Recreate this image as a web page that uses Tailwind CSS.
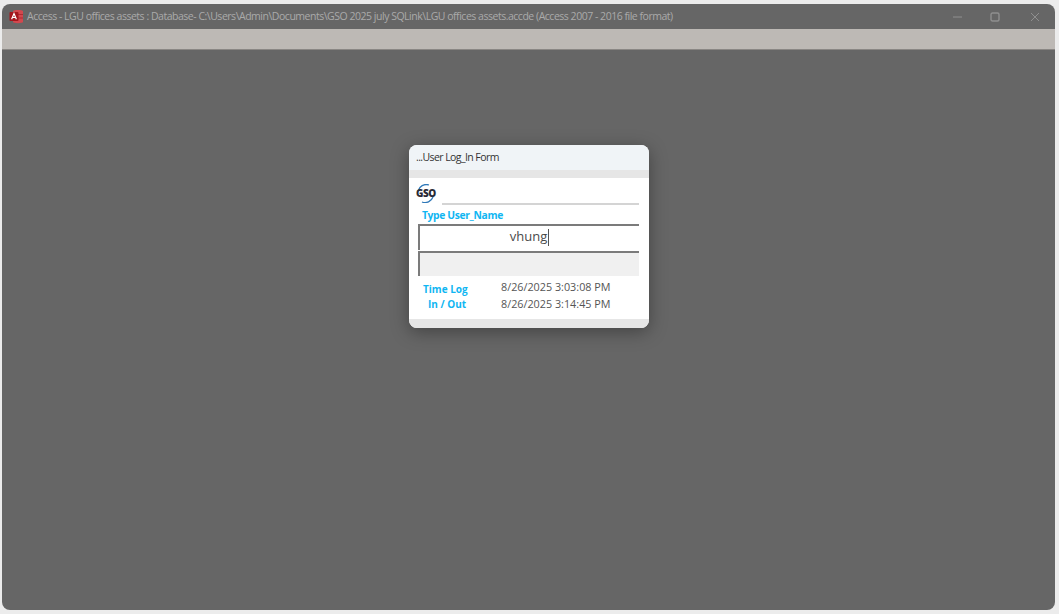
<!DOCTYPE html>
<html>
  <head>
    <title>Access - LGU offices assets</title>
    <script src="https://cdn.jsdelivr.net/npm/@tailwindcss/browser@4"></script>
  </head>

  <body>
    <div class="h-[614px] w-[1059px] overflow-hidden bg-[#ececec] pt-[4px] pl-[2px] pr-[4px] pb-[4px]" style='font-family: "Open Sans", "Noto Sans", sans-serif;'>
      <div class="flex h-[606px] flex-col overflow-hidden rounded-[8px] bg-[#666666]">
        <!-- Title bar -->
        <header class="flex h-[25px] shrink-0 items-center pl-[7px]">
          <svg class="h-[15px] w-[15px] shrink-0" viewBox="0 0 15 15">
            <path d="M4 2C4 0.5 14 0.5 14 2V13C14 14.5 4 14.5 4 13Z" fill="#d2484e"></path>
            <path d="M8 5.5H14M8 9H14" stroke="#a8282f" stroke-width="0.9"></path>
            <rect x="0.5" y="3" width="9" height="9" rx="1" fill="#a4161d"></rect>
            <path d="M2.6 10.3L5 4.6L7.4 10.3M3.5 8.5H6.5" fill="none" stroke="#ffffff" stroke-width="1.2"></path>
          </svg>
          <span class="ml-[3px] text-[10.5px] tracking-[-0.48px] whitespace-nowrap text-[#aaaaaa]">Access - LGU offices assets : Database- C:\Users\Admin\Documents\GSO 2025 july SQLink\LGU offices assets.accde (Access 2007 - 2016 file format)</span>
          <div class="ml-auto flex items-center pr-[15px]">
            <svg class="mr-[27px] h-[10px] w-[11px]" viewBox="0 0 11 10"><path d="M1 5H10" stroke="#8f8f8f" stroke-width="1"></path></svg>
            <svg class="mr-[30px] h-[10px] w-[10px]" viewBox="0 0 10 10"><rect x="1" y="1" width="8" height="8" rx="1.5" fill="none" stroke="#8f8f8f" stroke-width="1.4"></rect></svg>
            <svg class="h-[10px] w-[10px]" viewBox="0 0 10 10"><path d="M1 1L9 9M9 1L1 9" stroke="#8f8f8f" stroke-width="1"></path></svg>
          </div>
        </header>

        <!-- Ribbon strip -->
        <div class="h-[21px] shrink-0 border-b border-[#8a8784] bg-[#bdb9b5]"></div>

        <!-- Workspace -->
        <main class="flex grow justify-center pt-[95px] pl-[1px]">
          <section class="flex h-[183px] w-[240px] flex-col overflow-hidden rounded-[8px] bg-white shadow-[0_4px_18px_rgba(0,0,0,0.35)]">
            <div class="flex h-[25px] shrink-0 items-center bg-[#f0f4f7] pl-[7px] text-[10.5px] tracking-[-0.58px] text-[#333333]">...User Log_In Form</div>
            <div class="h-[8px] shrink-0 bg-[#e6e6e6]"></div>

            <div class="flex grow flex-col pr-[10px] pl-[9px]">
              <!-- Logo row -->
              <div class="flex h-[27px] shrink-0 items-end">
                <div class="relative mt-[3px] ml-[-2px] h-[19px] w-[19px] shrink-0 self-center">
                  <svg class="absolute inset-0 h-full w-full" viewBox="0 0 19 19">
                    <path d="M2 7A8.5 8.5 0 0 1 13 1M17 13A8.5 8.5 0 0 1 6 18" fill="none" stroke="#2f78b8" stroke-width="1.3"></path>
                  </svg>
                  <span class="absolute top-[3px] left-0 text-[10px] leading-[13px] font-extrabold tracking-[-0.5px] text-[#2a2a35]">GSO</span>
                </div>
                <div class="ml-[7px] h-[2px] grow bg-[#d4d4d4]"></div>
              </div>

              <div class="mt-[3px] flex h-[16px] shrink-0 items-center pl-[4px] text-[10.3px] tracking-[-0.35px] font-bold text-[#0fb6f2]">Type User_Name</div>

              <div class="flex h-[26px] shrink-0 items-center justify-center border-t-2 border-l-2 border-[#7b7b7b] bg-white pb-[2px] text-[13px] text-[#4a4a4a]">
                <span>vhung</span><span class="ml-[0.5px] h-[17px] w-[1.5px] bg-[#555555]"></span>
              </div>
              <div class="mt-[1px] h-[25px] shrink-0 border-t-2 border-l-2 border-[#7b7b7b] bg-[#f0f0f0]"></div>

              <!-- Time log -->
              <div class="flex grow">
                <div class="flex w-[74px] shrink-0 flex-col pt-[6px] text-[10px] leading-[15px] font-bold text-[#0fb6f2]">
                  <span class="pl-[5px]">Time Log</span>
                  <span class="pl-[10px]">In / Out</span>
                </div>
                <div class="flex flex-col pt-[2px] pl-[9px] text-[10.8px] leading-[17px] text-[#555555]">
                  <span>8/26/2025 3:03:08 PM</span>
                  <span>8/26/2025 3:14:45 PM</span>
                </div>
              </div>
            </div>

            <div class="h-[9px] shrink-0 bg-[#e6e6e6]"></div>
          </section>
        </main>
      </div>
    </div>
  </body>
</html>
